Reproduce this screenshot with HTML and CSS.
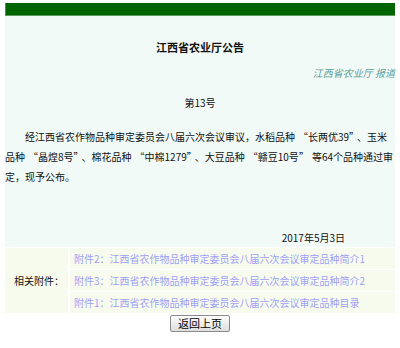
FILE: index.html
```html
<!DOCTYPE html>
<html lang="zh-CN">
<head>
    <meta charset="UTF-8">
    <title>江西省农业厅公告</title>
    <link rel="stylesheet" href="styles.css">
</head>
<body>
    <div class="page">
        <div class="topbar"></div>

        <div class="content">
            <h1>江西省农业厅公告</h1>
            <div class="source">江西省农业厅 报道</div>
            <div class="number">第13号</div>
            <p class="text">经江西省农作物品种审定委员会八届六次会议审议，水稻品种<span class="lq">“</span>长两优39<span class="rq">”</span>、玉米品种<span class="lq">“</span>晶煌8号<span class="rq">”</span>、棉花品种<span class="lq">“</span>中棉1279<span class="rq">”</span>、大豆品种<span class="lq">“</span>赣豆10号<span class="rq">”</span>等64个品种通过审定，现予公布。</p>
            <div class="date">2017年5月3日</div>
        </div>

        <div class="attach">
            <div class="attach-label">相关附件：</div>
            <div class="attach-item"><a href="#">附件2：江西省农作物品种审定委员会八届六次会议审定品种简介1</a></div>
            <div class="attach-item"><a href="#">附件3：江西省农作物品种审定委员会八届六次会议审定品种简介2</a></div>
            <div class="attach-item"><a href="#">附件1：江西省农作物品种审定委员会八届六次会议审定品种目录</a></div>
        </div>

        <div class="actions">
            <button type="button" onclick="history.back()">返回上页</button>
        </div>
    </div>
</body>
</html>
```

FILE: styles.css
```css
body {
    margin: 0;
    font-family: "Noto Sans CJK SC", "Liberation Sans", sans-serif;
    font-size: 10px;
    color: #111;
    background: #fff;
}
.page {
    margin: 3px 5px 0 5px;
}
.topbar {
    height: 13px;
    background-color: #006400;
    border-left: 1px solid #4f8f4f;
    border-bottom: 1px solid #5e9a5e;
    box-sizing: border-box;
}
.content {
    background-color: #f1faf7;
    padding: 1px 0 2px 0;
}
h1 {
    font-size: 11px;
    font-weight: bold;
    line-height: 14px;
    text-align: center;
    margin: 23px 0 0 0;
}
.source {
    text-align: right;
    font-style: italic;
    color: #5f9e9a;
    line-height: 14px;
    margin-top: 12px;
}
.number {
    text-align: center;
    line-height: 14px;
    margin-top: 16px;
}
.text {
    margin: 17px 0 0 0;
    line-height: 20px;
    text-indent: 2em;
}
/* 引号按全角宽度留白 */
.lq {
    margin-left: 3px;
}
.rq {
    margin-right: 3px;
}
.date {
    text-align: right;
    padding-right: 50px;
    line-height: 14px;
    margin-top: 44px;
}
.attach {
    display: grid;
    grid-template-columns: 63px 1fr;
    grid-auto-rows: 21px;
    gap: 1px 2px;
    margin-top: 1px;
}
.attach-label {
    grid-row: span 3;
    display: flex;
    align-items: center;
    justify-content: flex-end;
    padding-right: 4px;
    background-color: #f7fbee;
}
.attach-item {
    display: flex;
    align-items: center;
    padding-left: 4px;
    background-color: #f7fbee;
}
.attach-item a {
    color: #a0a0f6;
    text-decoration: none;
}
.actions {
    text-align: center;
    padding-top: 2px;
}
button {
    width: 60px;
    height: 17px;
    padding: 0;
    font-family: inherit;
    font-size: 11px;
    line-height: 15px;
    color: #000;
    background: linear-gradient(#fdfdfd, #dedede);
    border: 1px solid #8a8a8a;
    border-radius: 2px;
    cursor: pointer;
}
```
